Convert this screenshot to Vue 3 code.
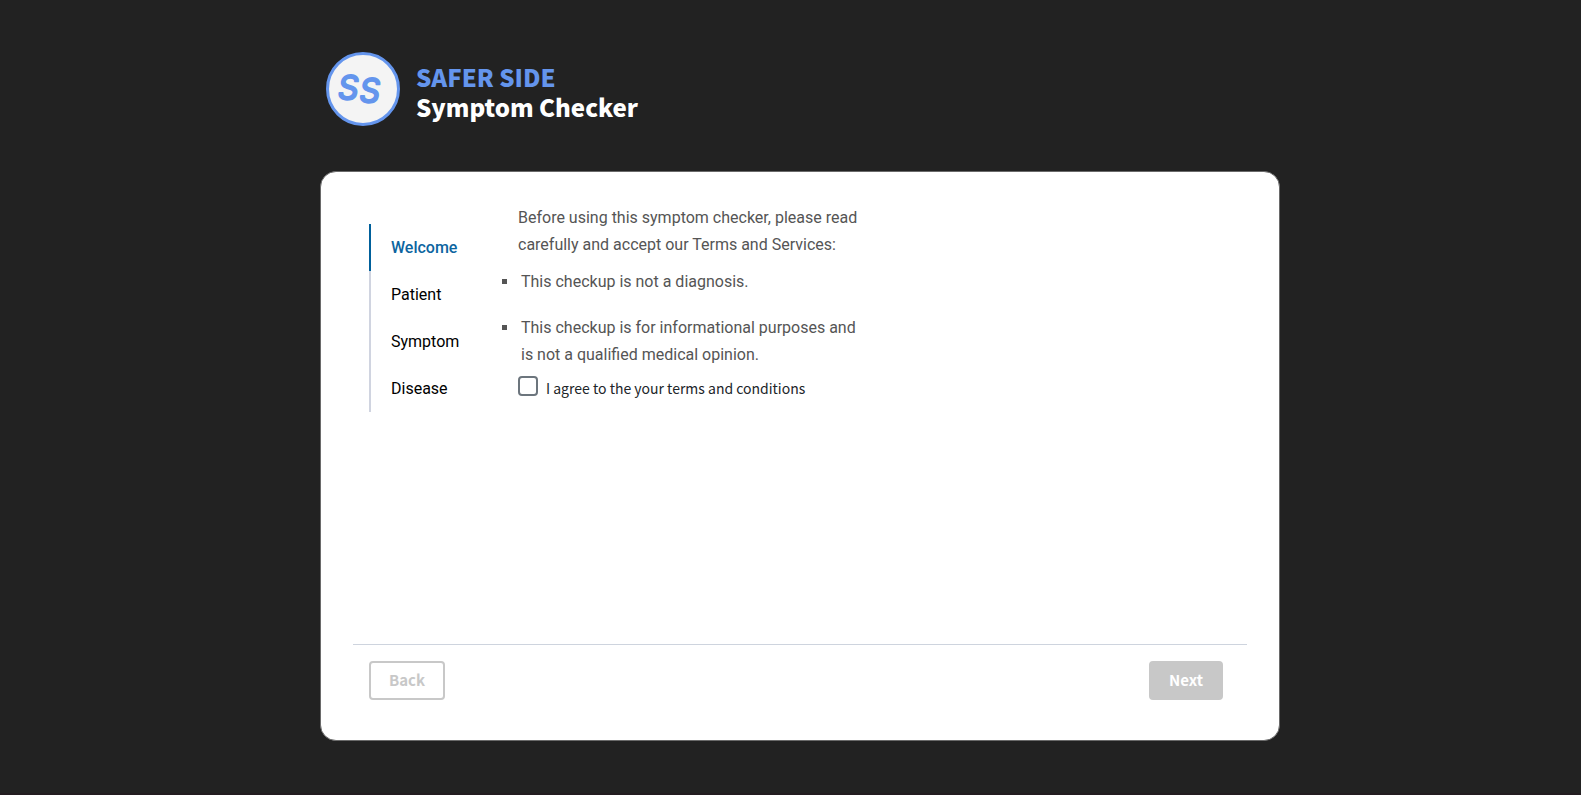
<script setup>
import { ref } from 'vue'

const steps = ['Welcome', 'Patient', 'Symptom', 'Disease']
const current = ref(0)
const agreed = ref(false)
const terms = [
  'This checkup is not a diagnosis.',
  'This checkup is for informational purposes and is not a qualified medical opinion.'
]
</script>

<template>
  <div class="page">
    <div class="wrap">
      <header class="brand">
        <svg class="logo" viewBox="0 0 74 74" role="img" aria-label="Safer Side">
          <circle cx="37" cy="37" r="35.5" />
          <text x="12" y="47">S<tspan dx="1" dy="3">S</tspan></text>
        </svg>
        <h1 class="title">
          <span class="name">SAFER SIDE</span>
          <span>Symptom Checker</span>
        </h1>
      </header>

      <main class="card">
        <div class="body">
          <nav class="steps" aria-label="Progress">
            <ol>
              <li v-for="(step, i) in steps" :key="step" :class="{ active: i === current }">{{ step }}</li>
            </ol>
          </nav>
          <section class="content">
            <p class="intro">Before using this symptom checker, please read carefully and accept our Terms and Services:</p>
            <ul class="terms">
              <li v-for="term in terms" :key="term">{{ term }}</li>
            </ul>
            <div class="agree">
              <input id="agree" v-model="agreed" type="checkbox" />
              <label for="agree">I agree to the your terms and conditions</label>
            </div>
          </section>
        </div>
        <footer class="actions">
          <button type="button" class="btn back" :disabled="current === 0">Back</button>
          <button type="button" class="btn next" :disabled="!agreed">Next</button>
        </footer>
      </main>
    </div>
  </div>
</template>

<style>
body {
  margin: 0;
  background: #222;
}
</style>

<style scoped>
.page {
  box-sizing: border-box;
  min-height: 100vh;
  padding: 52px 0 52px 19px;
  border-bottom: 2px solid #231c20;
  background: #222;
  font-family: "Noto Sans CJK SC", "Noto Sans", sans-serif;
}
.wrap {
  max-width: 960px;
  margin: 0 auto;
}
.brand {
  display: flex;
  gap: 16px;
  padding-left: 6px;
  margin-bottom: 45px;
}
.logo {
  flex: none;
  width: 74px;
  height: 74px;
}
.logo circle {
  fill: #f4f4f4;
  stroke: #6495ed;
  stroke-width: 3;
}
.logo text {
  fill: #6495ed;
  stroke: #6495ed;
  stroke-width: 2;
  stroke-linejoin: round;
  font: italic 400 32px Inter, sans-serif;
}
.title {
  display: flex;
  flex-direction: column;
  margin: 10px 0 0;
  font-size: 24px;
  line-height: 30px;
  font-weight: 900;
  color: #fff;
}
.name {
  color: #6495ed;
}
.card {
  box-sizing: border-box;
  display: flex;
  flex-direction: column;
  min-height: 570px;
  padding: 32px 32px 40px;
  border: 1px solid #6a6a6a;
  border-radius: 16px;
  background: #fff;
  font-family: Roboto, sans-serif;
  font-size: 16px;
}
.body {
  display: flex;
  flex: 1;
  padding: 0 16px;
}
.steps {
  width: 132px;
  padding-top: 20px;
}
.steps ol {
  margin: 0;
  padding: 0;
  list-style: none;
}
.steps li {
  padding-left: 20px;
  border-left: 2px solid #d0d4e0;
  line-height: 47px;
  color: #000;
}
.steps li.active {
  border-color: #00609b;
  color: #0d65a0;
  font-weight: 500;
}
.content {
  max-width: 352px;
  padding-left: 17px;
  color: #555;
  line-height: 27px;
}
.intro {
  margin: 0 0 10px;
}
.terms {
  margin: 0;
  padding-left: 1px;
  list-style: square;
}
.terms li {
  padding-left: 2px;
}
.terms li + li {
  margin-top: 19px;
}
.agree {
  display: flex;
  gap: 8px;
  margin-top: 8px;
}
.agree input {
  box-sizing: border-box;
  appearance: none;
  width: 20px;
  height: 20px;
  margin: 0;
  border: 2px solid #6c757d;
  border-radius: 4px;
  background: #fff;
}
.agree input:checked {
  background: #00609b;
}
.agree label {
  color: #212529;
  font-family: "Noto Sans CJK SC", "Noto Sans", sans-serif;
  font-size: 14px;
  line-height: 24px;
}
.actions {
  display: flex;
  justify-content: space-between;
  padding: 16px 24px 0 16px;
  border-top: 1px solid #ced4de;
}
.btn {
  box-sizing: border-box;
  height: 39px;
  padding: 0 18px 2px;
  border: 2px solid #c8c8c8;
  border-radius: 4px;
  font-family: "Noto Sans CJK SC", "Noto Sans", sans-serif;
  font-size: 15px;
  font-weight: 700;
  line-height: 20px;
}
.back {
  background: #fff;
  color: #c8c8c8;
}
.next {
  background: #c8c8c8;
  color: #fff;
}
</style>
